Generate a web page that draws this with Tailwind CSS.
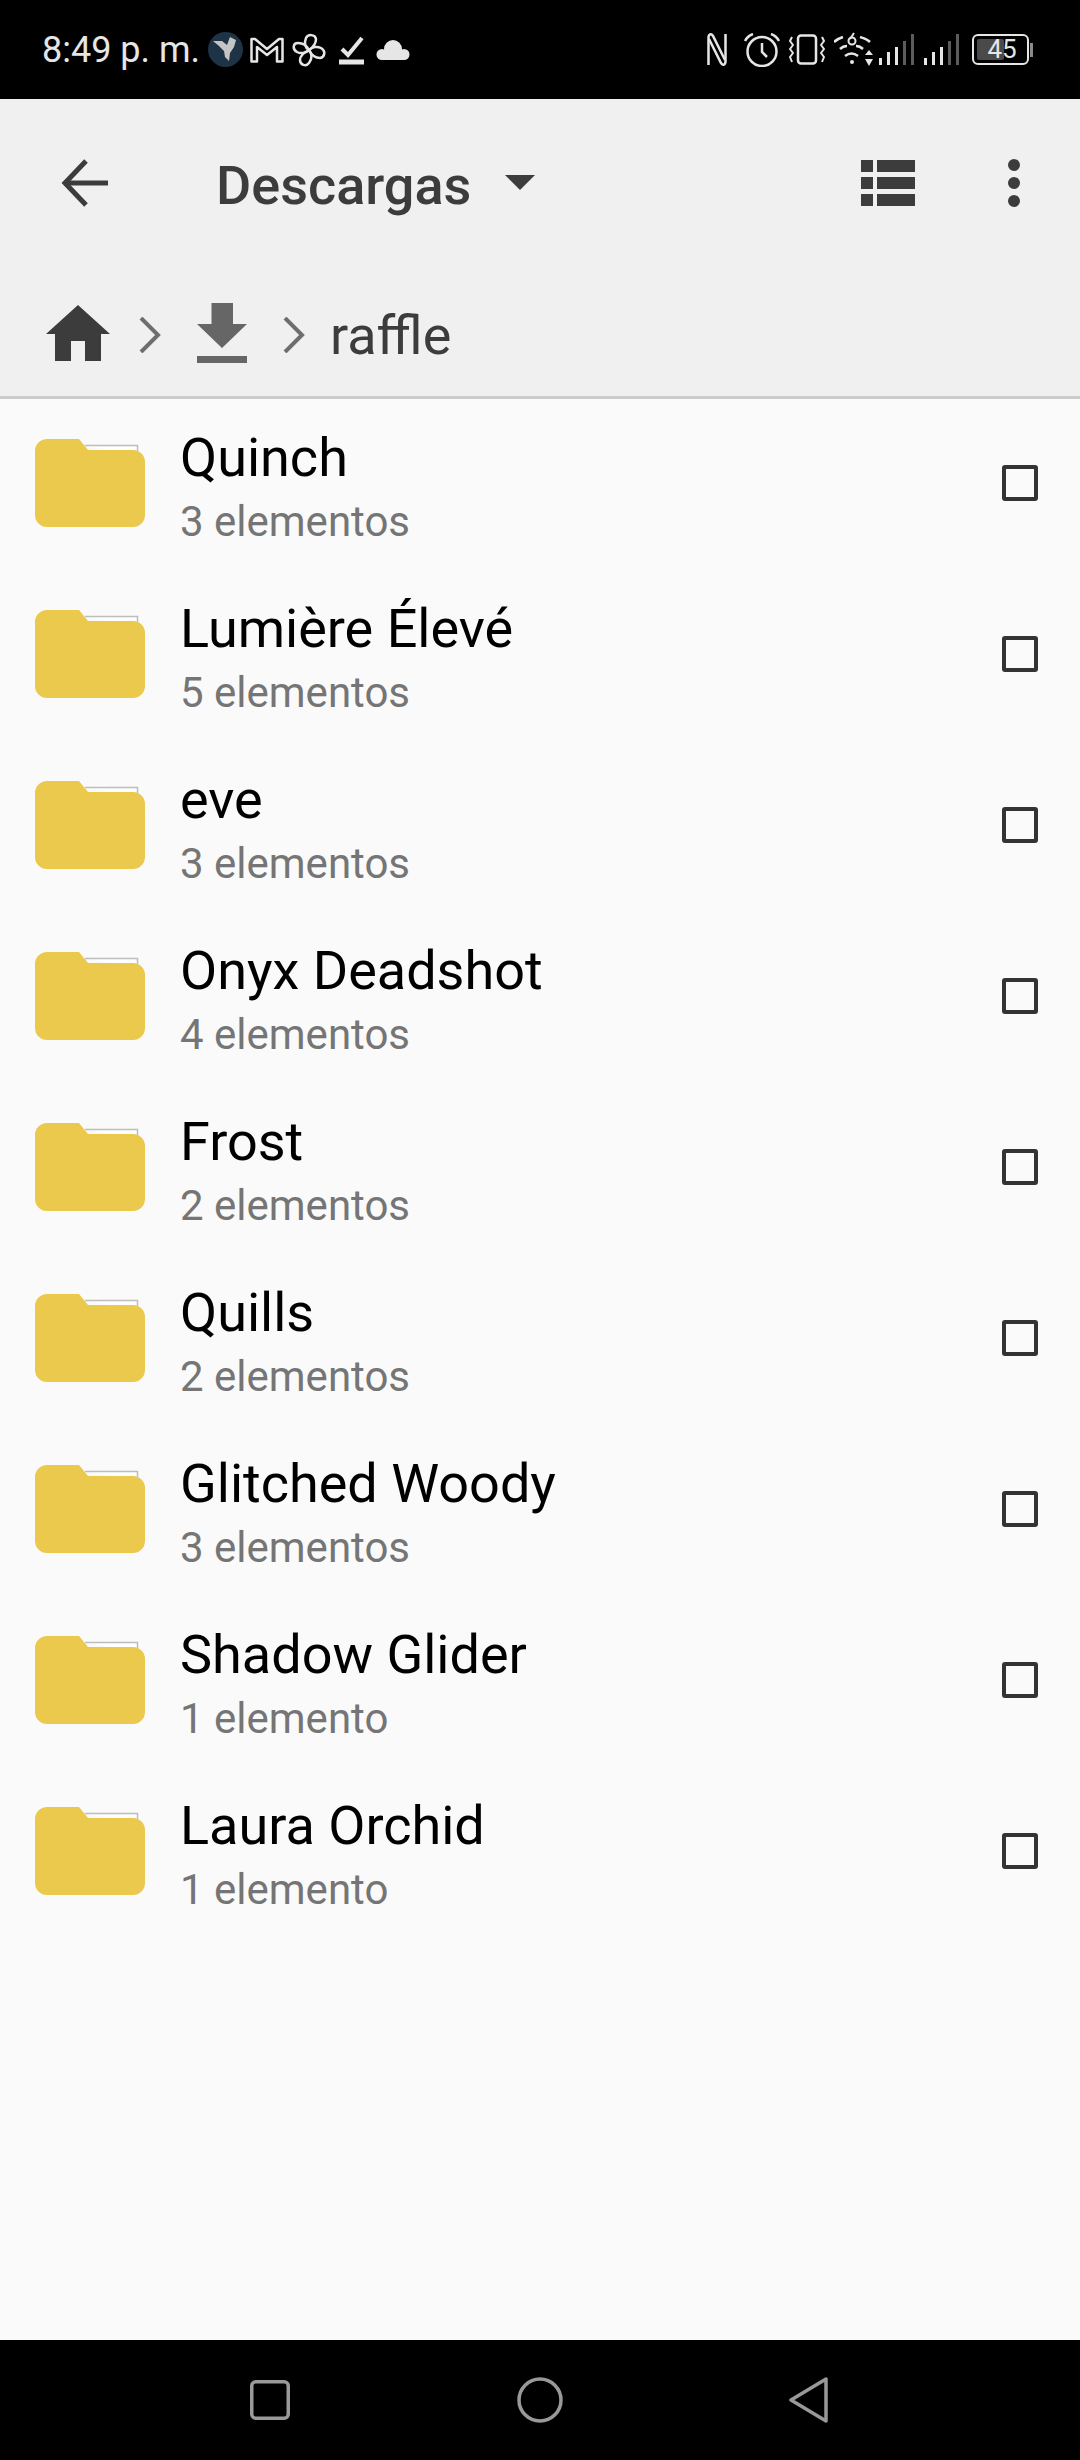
<!DOCTYPE html>
<html lang="es">

<head>
    <meta charset="UTF-8">
    <meta name="viewport" content="width=device-width, initial-scale=1.0">
    <title>Descargas</title>
    <script src="https://cdn.jsdelivr.net/npm/@tailwindcss/browser@4"></script>
</head>

<body class="bg-[#fafafa] font-['Roboto',sans-serif]">

    <div class="w-[1080px] h-[2460px] flex flex-col overflow-hidden">

        <!-- status bar -->
        <div class="h-[99px] bg-black flex items-center pl-[42px] pr-[47px] shrink-0 text-[#e6e6e6]">
            <span class="text-[36px] leading-none w-[166px] whitespace-nowrap">8:49 p. m.</span>
            <svg class="w-[35px] h-[35px]" viewBox="0 0 35 35">
                <circle cx="17.5" cy="17.5" r="17.5" fill="#1f3347" />
                <path d="M5 9 L14 9 L19 13 L22 5 L28 8 L26 15 L22 21 L21 29 L17 25 L16 19 L11 14 Z" fill="#c4c4c4" />
            </svg>
            <svg class="w-[34px] h-[26px] ml-[7px]" viewBox="0 0 34 26" fill="none" stroke="#e6e6e6" stroke-width="2.5" stroke-linejoin="round">
                <path d="M1.5 2 H5 L17 12 L29 2 H32.5 V24.5 H27 V10 L17 18 L7 10 V24.5 H1.5 Z" />
            </svg>
            <svg class="w-[34px] h-[34px] ml-[8px]" viewBox="0 0 34 34" fill="none" stroke="#e6e6e6" stroke-width="2.5" stroke-linejoin="round">
                <path d="M17 17 C13 15 12 10 14 5 C16 1 23 1 24 6 C24 11 20 15 17 17 Z" />
                <path d="M17 17 C20 14 25 13 29 15 C34 18 33 24 28 25 C23 25 19 21 17 17 Z" />
                <path d="M17 17 C20 21 20 26 17 30 C14 34 8 32 8 27 C8 23 13 19 17 17 Z" />
                <path d="M17 17 C14 20 9 21 5 19 C0 16 1 10 6 10 C11 10 15 13 17 17 Z" />
            </svg>
            <svg class="w-[25px] h-[30px] ml-[13px]" viewBox="0 0 25 30" fill="none" stroke="#e6e6e6">
                <path d="M3 14 L9 20 L23 3" stroke-width="4" />
                <path d="M0 27 H25" stroke-width="5" />
            </svg>
            <svg class="w-[34px] h-[20px] ml-[12px]" viewBox="0 0 34 20" fill="#e6e6e6">
                <circle cx="17" cy="9" r="9" />
                <circle cx="6" cy="14.5" r="5.5" />
                <circle cx="28" cy="14.5" r="5.5" />
                <rect x="6" y="12" width="22" height="8" />
            </svg>

            <div class="flex-1"></div>

            <svg class="w-[20px] h-[35px]" viewBox="0 0 20 35" fill="none" stroke="#e6e6e6" stroke-width="2.5">
                <path d="M1.5 33 V6 C1.5 2 4 1 6 4 L18 28" />
                <path d="M18.5 2 V29 C18.5 33 16 34 14 31 L2 7" />
            </svg>
            <svg class="w-[36px] h-[34px] ml-[17px]" viewBox="0 0 36 34" fill="none" stroke="#e6e6e6" stroke-width="2.5">
                <circle cx="18" cy="18.5" r="14.5" />
                <path d="M18 10 V19 L23 24" />
                <path d="M1 8 C3 4 6 2 9 1" />
                <path d="M35 8 C33 4 30 2 27 1" />
            </svg>
            <svg class="w-[36px] h-[31px] ml-[9px]" viewBox="0 0 36 31" fill="none" stroke="#e6e6e6" stroke-width="2.5" stroke-linejoin="round">
                <rect x="9" y="1.5" width="18" height="28" rx="3" />
                <path d="M3 3 L1 7 L4 11 L1 15 L4 19 L1 23 L3 28" stroke-width="2" />
                <path d="M33 3 L35 7 L32 11 L35 15 L32 19 L35 23 L33 28" stroke-width="2" />
            </svg>
            <svg class="w-[39px] h-[35px] ml-[9px]" viewBox="0 0 39 35" fill="none" stroke="#e6e6e6" stroke-width="2.5">
                <path d="M0 10 C3 7 6 6 9 5" />
                <path d="M26 5 C29 6 33 7 36 10" />
                <path d="M6 17 C8 15 11 14 13 14" />
                <path d="M22 14 C24 14 27 15 29 17" />
                <path d="M11 24 C15 21 20 21 24 24" />
                <circle cx="18" cy="9" r="3.5" stroke-width="2" />
                <path d="M20 1 L16 7" stroke-width="2" />
                <circle cx="18" cy="30" r="2" fill="#e6e6e6" stroke="none" />
                <path d="M31 23 L35 18 L39 23 Z M31 27 H39 L35 34 Z" fill="#e6e6e6" stroke="none" />
            </svg>
            <svg class="w-[35px] h-[31px] ml-[6px]" viewBox="0 0 35 31">
                <rect x="0" y="24" width="3" height="7" fill="#e6e6e6" />
                <rect x="8" y="18" width="3" height="13" fill="#e6e6e6" />
                <rect x="16" y="13" width="3" height="18" fill="#e6e6e6" />
                <rect x="24" y="7" width="3" height="24" fill="#5c5c5c" />
                <rect x="32" y="0" width="3" height="31" fill="#5c5c5c" />
            </svg>
            <svg class="w-[35px] h-[31px] ml-[10px]" viewBox="0 0 35 31">
                <rect x="0" y="24" width="3" height="7" fill="#e6e6e6" />
                <rect x="8" y="18" width="3" height="13" fill="#e6e6e6" />
                <rect x="16" y="13" width="3" height="18" fill="#e6e6e6" />
                <rect x="24" y="7" width="3" height="24" fill="#5c5c5c" />
                <rect x="32" y="0" width="3" height="31" fill="#5c5c5c" />
            </svg>
            <div class="relative w-[61px] h-[31px] ml-[13px] flex">
                <div class="w-[57px] h-[31px] rounded-[6px] border-[2.5px] border-[#e6e6e6] p-[3px]">
                    <div class="w-[27px] h-full bg-[#4a4a4a] rounded-[2px]"></div>
                </div>
                <div class="w-[3px] h-[14px] bg-[#8a8a8a] self-center ml-[1px]"></div>
                <span class="absolute left-[14px] top-0 w-[32px] text-center text-[26px] leading-[31px] text-[#e6e6e6]">45</span>
            </div>
        </div>

        <!-- toolbar -->
        <div class="bg-[#f0f0f0] border-b-[3px] border-[#cccccc] shrink-0">
            <div class="h-[167px] flex items-center pl-[61px] pr-[60px]">
                <svg class="w-[47px] h-[48px]" viewBox="0 0 47 48" fill="none" stroke="#3c3c3c" stroke-width="5">
                    <path d="M47 24 H4" />
                    <path d="M25 2 L4 24 L25 46" />
                </svg>
                <h1 class="ml-[108px] w-[253px] pt-[6px] text-[54px] leading-none font-medium text-[#3c3c3c] whitespace-nowrap">Descargas</h1>
                <svg class="w-[30px] h-[15px] ml-[36px]" viewBox="0 0 30 15">
                    <path d="M0 0 H30 L15 15 Z" fill="#3c3c3c" />
                </svg>
                <div class="flex-1"></div>
                <svg class="w-[54px] h-[46px]" viewBox="0 0 54 46" fill="#3c3c3c">
                    <rect x="0" y="0" width="12" height="12" />
                    <rect x="16" y="0" width="38" height="12" />
                    <rect x="0" y="17" width="12" height="12" />
                    <rect x="16" y="17" width="38" height="12" />
                    <rect x="0" y="34" width="12" height="12" />
                    <rect x="16" y="34" width="38" height="12" />
                </svg>
                <svg class="w-[12px] h-[48px] ml-[93px]" viewBox="0 0 12 48" fill="#3c3c3c">
                    <circle cx="6" cy="6" r="6" />
                    <circle cx="6" cy="24" r="6" />
                    <circle cx="6" cy="42" r="6" />
                </svg>
            </div>
            <div class="h-[130px] flex items-center pl-[46px] pt-[4px]">
                <svg class="w-[64px] h-[56px]" viewBox="0 0 64 56" fill="#3c3c3c">
                    <path d="M32 0 L64 29 H55 V56 H39 V36 H25 V56 H9 V29 H0 Z" />
                </svg>
                <svg class="w-[22px] h-[36px] ml-[29px] mt-[3px]" viewBox="0 0 22 36" fill="none" stroke="#6e6e6e" stroke-width="4">
                    <path d="M2 1 L19 18 L2 35" />
                </svg>
                <svg class="w-[50px] h-[60px] ml-[36px]" viewBox="0 0 50 60" fill="#666666">
                    <path d="M14.5 0 H36 V21 H50 L25 45 L0 21 H14.5 Z" />
                    <rect x="0" y="53" width="50" height="7" />
                </svg>
                <svg class="w-[22px] h-[36px] ml-[36px] mt-[3px]" viewBox="0 0 22 36" fill="none" stroke="#6e6e6e" stroke-width="4">
                    <path d="M2 1 L19 18 L2 35" />
                </svg>
                <span class="ml-[25px] pt-[6px] text-[54px] leading-none text-[#3c3c3c]">raffle</span>
            </div>
        </div>

        <!-- file list -->
        <div id="fileList" class="flex-1 bg-[#fafafa]"></div>

        <!-- navigation bar -->
        <div class="h-[120px] bg-black shrink-0 relative flex items-center">
            <svg class="w-[40px] h-[40px] ml-[250px]" viewBox="0 0 40 40" fill="none" stroke="#999999" stroke-width="3.5">
                <rect x="1.75" y="1.75" width="36.5" height="36.5" rx="4" />
            </svg>
            <svg class="w-[46px] h-[46px] ml-[227px]" viewBox="0 0 46 46" fill="none" stroke="#999999" stroke-width="3.5">
                <circle cx="23" cy="23" r="21" />
            </svg>
            <svg class="w-[39px] h-[46px] ml-[226px]" viewBox="0 0 39 46" fill="none" stroke="#999999" stroke-width="3.5" stroke-linejoin="round">
                <path d="M37 2 V44 L2 23 Z" />
            </svg>
        </div>

    </div>

    <script>
        const folders = [
            { name: 'Quinch', items: '3 elementos' },
            { name: 'Lumière Élevé', items: '5 elementos' },
            { name: 'eve', items: '3 elementos' },
            { name: 'Onyx Deadshot', items: '4 elementos' },
            { name: 'Frost', items: '2 elementos' },
            { name: 'Quills', items: '2 elementos' },
            { name: 'Glitched Woody', items: '3 elementos' },
            { name: 'Shadow Glider', items: '1 elemento' },
            { name: 'Laura Orchid', items: '1 elemento' }
        ];

        const fileList = document.getElementById('fileList');
        folders.forEach((folder) => {
            const row = document.createElement('div');
            row.className = 'h-[171px] flex items-center pl-[35px] pr-[42px] pb-[3px]';
            row.innerHTML = `
                <svg class="w-[110px] h-[88px] shrink-0" viewBox="0 0 110 88">
                    <path d="M50 6.5 H102.5 V16" fill="#ffffff" stroke="#bdbdbd" stroke-width="1.5" />
                    <path d="M12 0 H44 L53 11 H98 A12 12 0 0 1 110 23 V76 A12 12 0 0 1 98 88 H12 A12 12 0 0 1 0 76 V12 A12 12 0 0 1 12 0 Z" fill="#ebc94d" />
                </svg>
                <div class="ml-[35px] flex-1 pb-[3px]">
                    <p class="text-[54px] leading-[80px] text-black">${folder.name}</p>
                    <p class="text-[42px] leading-[48px] text-[#757575]">${folder.items}</p>
                </div>
                <div class="w-[36px] h-[36px] border-[4px] border-[#333333] rounded-[3px] shrink-0"></div>
            `;
            fileList.appendChild(row);
        });
    </script>

</body>

</html>
